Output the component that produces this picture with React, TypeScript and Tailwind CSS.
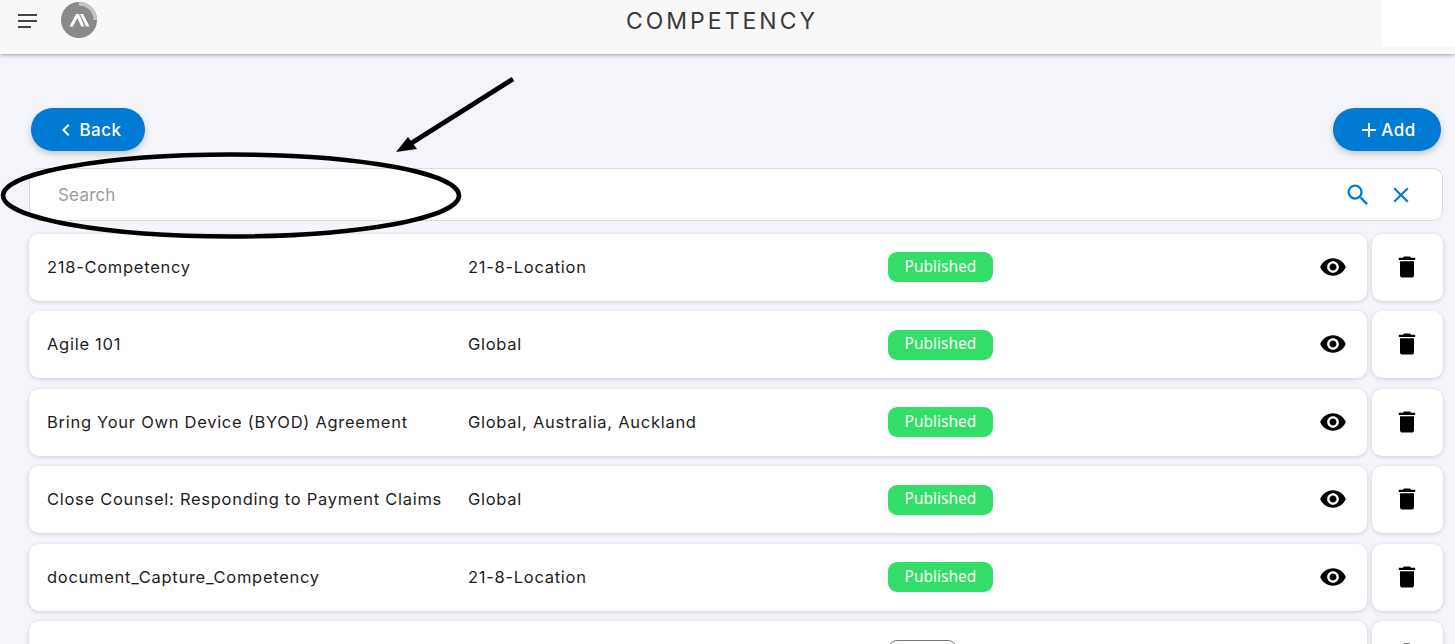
// App.tsx
import React from "react";
import { MdAdd, MdChevronLeft, MdClose, MdDelete, MdSearch, MdVisibility } from "react-icons/md";

const rows = [
  { name: "218-Competency", location: "21-8-Location" },
  { name: "Agile 101", location: "Global" },
  { name: "Bring Your Own Device (BYOD) Agreement", location: "Global, Australia, Auckland" },
  { name: "Close Counsel: Responding to Payment Claims", location: "Global" },
  { name: "document_Capture_Competency", location: "21-8-Location" },
  { name: "", location: "", draft: true },
];

const Logo = () => (
  <svg width="36" height="36" viewBox="0 0 36 36" className="block">
    <circle cx="18" cy="18" r="18" fill="#8a8a8a" />
    <path d="M18 0a18 18 0 0 1 18 18h-3.500A14.500 14.500 0 0 0 18 3.500z" fill="#c4c4c4" />
    <path d="M8.500 24.500L15 12h3l5.500 12.500h-3.200L16.300 16l-4.400 8.500zM19 12h3l6.500 12.500h-3.300z" fill="#fff" />
  </svg>
);

const Annotation = () => (
  <svg width="1455" height="644" viewBox="0 0 1455 644" className="absolute left-0 top-0 pointer-events-none">
    <ellipse cx="231" cy="195.500" rx="228" ry="41" fill="none" stroke="#000" strokeWidth="4.500" />
    <path d="M513 79L410 144" stroke="#000" strokeWidth="5" fill="none" />
    <path d="M396 152L408 137L417 149z" fill="#000" />
  </svg>
);

const Row = ({ name, location, draft }: { name: string; location: string; draft?: boolean }) => (
  <div className="flex gap-[5px] h-[67px] mb-[10.5px] shrink-0">
    <div className="flex-1 flex items-center bg-white rounded-[10px] shadow-[0_1px_4px_rgba(0,0,0,0.16)] pl-[18px] text-[16.5px] text-[#1d1d1d] tracking-[0.72px]">
      <div className="w-[421px] whitespace-nowrap">{name}</div>
      <div className="w-[420px]">{location}</div>
      <div className="w-[431px]">
        {draft ? (
          <div className="w-[69px] h-[30px] rounded-[9px] border border-[#777] bg-white" />
        ) : (
          <div className="w-[105px] h-[30px] rounded-[9px] bg-[#32de68] text-white text-[15.5px] tracking-normal flex items-center justify-center font-['Noto_Sans',sans-serif] pb-[2px]">
            Published
          </div>
        )}
      </div>
      <MdVisibility size={28} color="#000" className="mb-[1px]" />
    </div>
    <div className="w-[71px] flex items-center justify-center bg-white rounded-[10px] shadow-[0_1px_4px_rgba(0,0,0,0.16)] pr-[2px] pb-[1px]">
      <MdDelete size={28} color="#000" />
    </div>
  </div>
);

export default function App() {
  return (
    <div className="relative h-[644px] overflow-hidden bg-[#f4f5fa] font-['Inter',sans-serif]">
      {/* header */}
      <header className="relative flex items-start h-[54px] bg-[#f8f8f8] shadow-[0_1px_4px_rgba(0,0,0,0.35)]">
        <div className="w-[61px] pl-[18px] pt-[14px] flex flex-col gap-[4px] items-start">
          <span className="block w-[19px] h-[2px] bg-[#444]" />
          <span className="block w-[19px] h-[2px] bg-[#444]" />
          <span className="block w-[13px] h-[2px] bg-[#444]" />
        </div>
        <div className="pt-[2px]">
          <Logo />
        </div>
        <div className="flex-1 text-center pr-[35px] pt-[6px] text-[23px] leading-[30px] tracking-[3px] text-[#3a3a3a]">
          COMPETENCY
        </div>
        <div className="w-[73px] h-[47px] bg-white" />
      </header>

      <main className="pt-[54px] pl-[29px] pr-[12px]">
        <div className="flex justify-between items-start pl-[2px] pr-[2px]">
          <button className="flex items-center justify-center w-[114px] h-[43px] pl-[4px] rounded-full bg-[#007bd3] text-white text-[17px] font-medium shadow-[0_3px_6px_rgba(0,0,0,0.2)] tracking-[0.5px]">
            <MdChevronLeft size={24} className="ml-[-4px] mr-[1px]" />
            <span className="pt-[2px]">Back</span>
          </button>
          <button className="flex items-center justify-center w-[108px] h-[43px] pl-[1px] rounded-full bg-[#007bd3] text-white text-[17px] font-medium shadow-[0_3px_6px_rgba(0,0,0,0.2)] tracking-[0.5px]">
            <MdAdd size={24} className="ml-[-2px]" />
            <span className="pt-[2px]">Add</span>
          </button>
        </div>

        <div className="mt-[17px] mb-[12.7px] h-[53px] flex items-center bg-white rounded-[10px] border border-[#dcdcdc] pl-[28px] pr-[28px]">
          <span className="flex-1 pt-[3px] text-[17px] text-[#9b9b9b] tracking-[0.2px]">Search</span>
          <MdSearch size={28} color="#007bd3" />
          <MdClose size={26} color="#007bd3" className="ml-[16px]" />
        </div>

        <div className="flex flex-col">
          {rows.map((r, i) => (
            <Row key={i} {...r} />
          ))}
        </div>
      </main>

      <Annotation />
    </div>
  );
}
